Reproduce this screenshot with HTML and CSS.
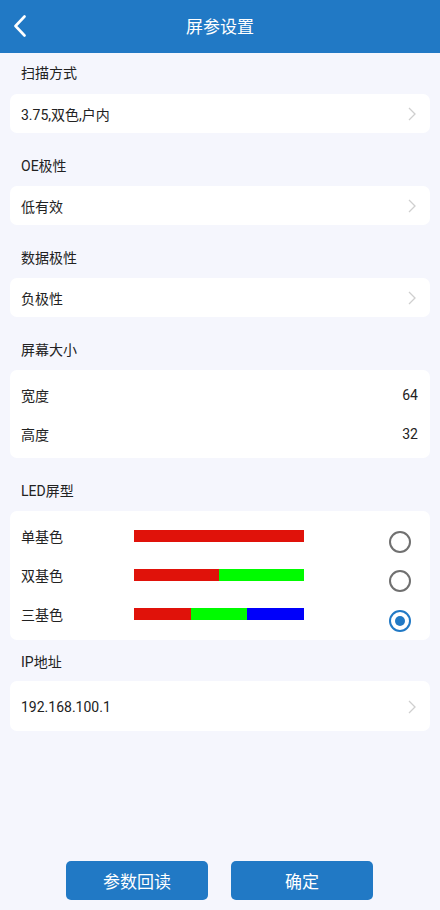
FILE: index.html
```html
<!DOCTYPE html>
<html lang="zh-CN">
<head>
<meta charset="utf-8">
<title>屏参设置</title>
<link rel="stylesheet" href="styles.css">
</head>
<body>
<div class="page">
  <header class="topbar">
    <span class="back">
      <svg width="14" height="22" viewBox="0 0 14 22"><path d="M11.5 1.5 L2.5 11 L11.5 20.5" fill="none" stroke="#fff" stroke-width="2.6" stroke-linecap="round" stroke-linejoin="round"/></svg>
    </span>
    <h1 class="title">屏参设置</h1>
  </header>

  <main class="content">
    <section class="section">
      <div class="label">扫描方式</div>
      <div class="card select"><span>3.75,双色,户内</span><span class="chev"><svg width="10" height="16" viewBox="0 0 10 16"><path d="M2 2 L8 8 L2 14" fill="none" stroke="#cfcfcf" stroke-width="1.3"/></svg></span></div>
    </section>

    <section class="section">
      <div class="label">OE极性</div>
      <div class="card select"><span>低有效</span><span class="chev"><svg width="10" height="16" viewBox="0 0 10 16"><path d="M2 2 L8 8 L2 14" fill="none" stroke="#cfcfcf" stroke-width="1.3"/></svg></span></div>
    </section>

    <section class="section">
      <div class="label">数据极性</div>
      <div class="card select"><span>负极性</span><span class="chev"><svg width="10" height="16" viewBox="0 0 10 16"><path d="M2 2 L8 8 L2 14" fill="none" stroke="#cfcfcf" stroke-width="1.3"/></svg></span></div>
    </section>

    <section class="section">
      <div class="label">屏幕大小</div>
      <div class="card list">
        <div class="row"><span>宽度</span><span>64</span></div>
        <div class="row"><span>高度</span><span>32</span></div>
      </div>
    </section>

    <section class="section">
      <div class="label">LED屏型</div>
      <div class="card list led">
        <div class="row led-row">
          <span class="led-name">单基色</span>
          <span class="bar"><i class="red"></i></span>
          <span class="radio"></span>
        </div>
        <div class="row led-row">
          <span class="led-name">双基色</span>
          <span class="bar"><i class="red"></i><i class="green"></i></span>
          <span class="radio"></span>
        </div>
        <div class="row led-row">
          <span class="led-name">三基色</span>
          <span class="bar"><i class="red"></i><i class="green"></i><i class="blue"></i></span>
          <span class="radio checked"></span>
        </div>
      </div>
    </section>

    <section class="section section-ip">
      <div class="label">IP地址</div>
      <div class="card select tall"><span>192.168.100.1</span><span class="chev"><svg width="10" height="16" viewBox="0 0 10 16"><path d="M2 2 L8 8 L2 14" fill="none" stroke="#cfcfcf" stroke-width="1.3"/></svg></span></div>
    </section>
  </main>

  <footer class="actions">
    <button class="btn">参数回读</button>
    <button class="btn">确定</button>
  </footer>
</div>
</body>
</html>
```
FILE: styles.css
```css
* { box-sizing: border-box; }
html, body { margin: 0; padding: 0; }
body {
  width: 440px;
  height: 910px;
  background: #f5f6fd;
  font-family: Roboto, "Noto Sans CJK SC", "Noto Sans", sans-serif;
  color: #222;
  font-size: 14px;
}
.page {
  height: 910px;
  display: flex;
  flex-direction: column;
}
.topbar {
  height: 53px;
  background: #2179c5;
  display: flex;
  align-items: center;
  justify-content: center;
  position: relative;
  flex-shrink: 0;
}
.back {
  position: absolute;
  left: 13px;
  top: 15px;
  width: 14px;
  height: 22px;
  display: flex;
}
.title {
  margin: 0;
  font-size: 17px;
  font-weight: 400;
  color: #fff;
  line-height: 24px;
}
.content {
  flex: 1;
  padding: 0 10px;
}
.section + .section { margin-top: 12px; }
.section-ip { margin-top: 0 !important; }
.label {
  padding: 11px 11px 10px;
  line-height: 20px;
  height: 41px;
  font-size: 14px;
  color: #222;
}
.section:first-child .label { padding-top: 10px; }
.section-ip .label { padding-top: 12px; padding-bottom: 9px; }
.card {
  background: #fff;
  border-radius: 7px;
}
.select {
  height: 39px;
  display: flex;
  align-items: center;
  justify-content: space-between;
  padding: 0 13px 0 11px;
}
.select.tall { height: 50px; padding-top: 2px; }
.chev { display: flex; }
.list { padding: 5px 12px 5px 11px; }
.row {
  height: 39px;
  display: flex;
  align-items: center;
  justify-content: space-between;
}
.led { padding-bottom: 7px; }
.led-row { justify-content: flex-start; }
.led-name { width: 113px; }
.bar {
  width: 170px;
  height: 12px;
  display: flex;
}
.bar i { flex: 1; display: block; }
.red { background: #e0120a; }
.green { background: #00fb00; }
.blue { background: #0000fa; }
.radio {
  margin-left: auto;
  margin-right: 7px;
  align-self: flex-start;
  margin-top: 15px;
  width: 22px;
  height: 22px;
  border: 2px solid #707070;
  border-radius: 50%;
  display: flex;
  align-items: center;
  justify-content: center;
}
.radio.checked { border-color: #2179c5; margin-top: 16px; }
.radio.checked::after {
  content: "";
  width: 10px;
  height: 10px;
  border-radius: 50%;
  background: #2179c5;
}
.actions {
  display: flex;
  justify-content: center;
  gap: 23px;
  padding: 0 1px 10px 0;
  flex-shrink: 0;
}
.btn {
  width: 142px;
  height: 39px;
  border: 0;
  border-radius: 5px;
  background: #2179c5;
  color: #fff;
  font-family: Roboto, "Noto Sans CJK SC", sans-serif;
  font-size: 17px;
  padding: 0;
}
```
